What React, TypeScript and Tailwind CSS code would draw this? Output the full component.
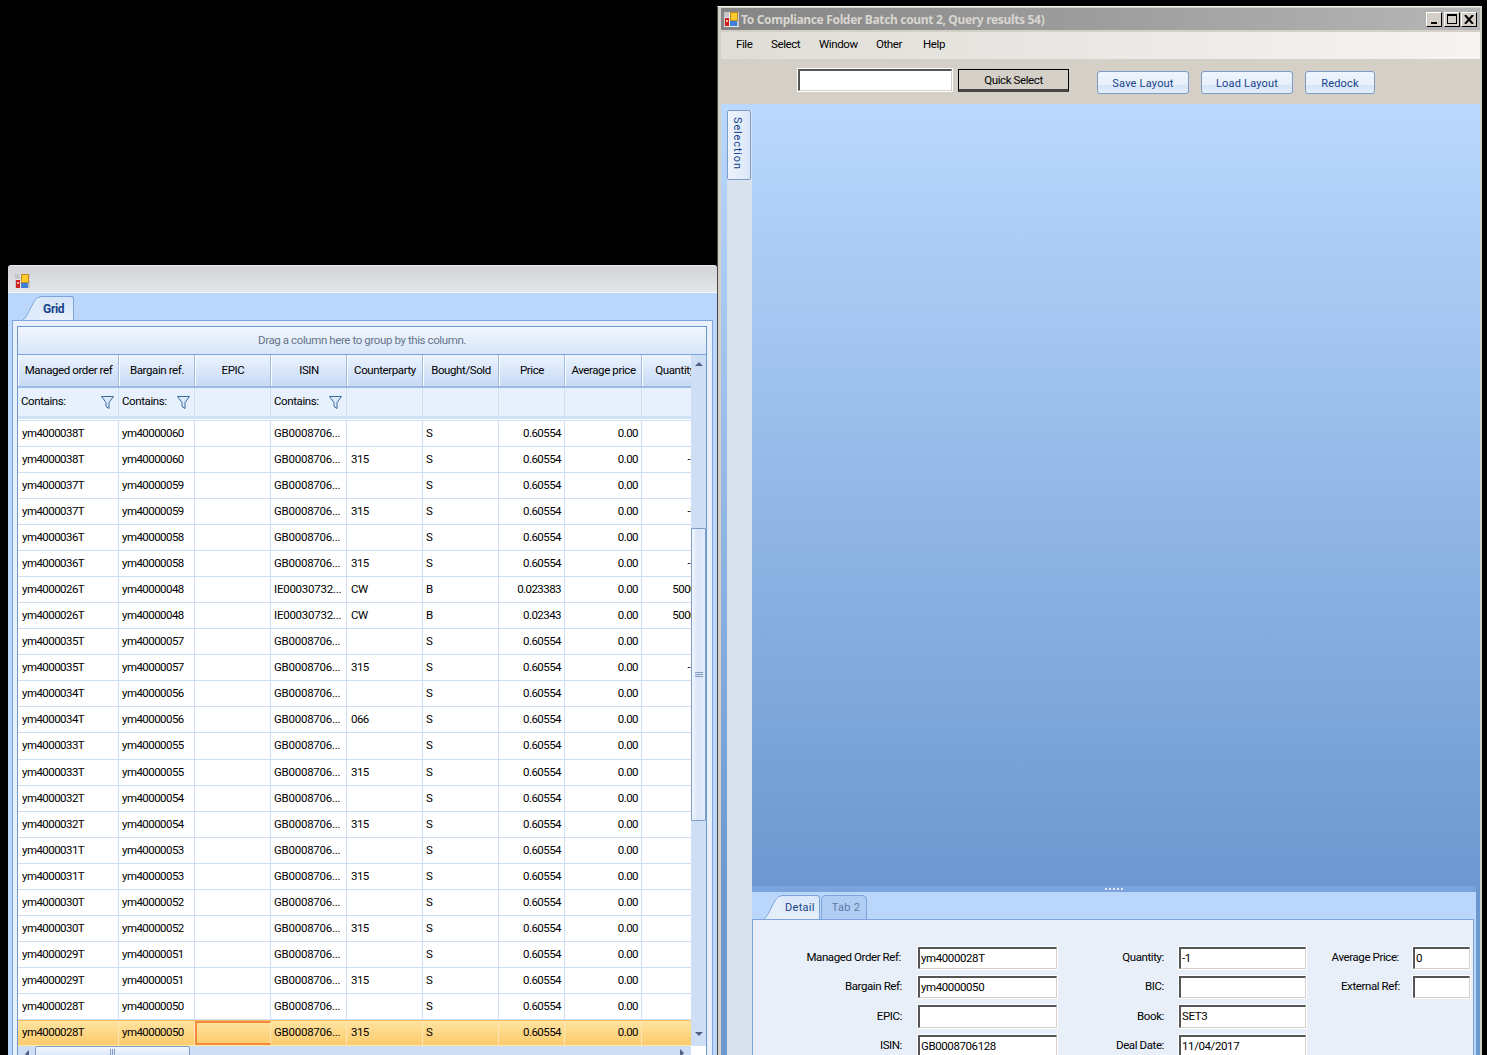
import { FC, ReactNode } from "react";

const FONT = "font-['Roboto','Liberation_Sans',sans-serif]";

const colWidths = [101, 76, 76, 76, 76, 76, 66, 77, 66];

type Row = {
  order: string;
  bargain: string;
  isin?: string;
  cp?: string;
  side?: string;
  price?: string;
  qty?: string;
};

const rows: Row[] = [
  { order: "ym4000038T", bargain: "ym40000060" },
  { order: "ym4000038T", bargain: "ym40000060", cp: "315", qty: "-1" },
  { order: "ym4000037T", bargain: "ym40000059" },
  { order: "ym4000037T", bargain: "ym40000059", cp: "315", qty: "-1" },
  { order: "ym4000036T", bargain: "ym40000058" },
  { order: "ym4000036T", bargain: "ym40000058", cp: "315", qty: "-1" },
  { order: "ym4000026T", bargain: "ym40000048", isin: "IE00030732...", cp: "CW", side: "B", price: "0.023383", qty: "5000" },
  { order: "ym4000026T", bargain: "ym40000048", isin: "IE00030732...", cp: "CW", side: "B", price: "0.02343", qty: "5000" },
  { order: "ym4000035T", bargain: "ym40000057" },
  { order: "ym4000035T", bargain: "ym40000057", cp: "315", qty: "-1" },
  { order: "ym4000034T", bargain: "ym40000056" },
  { order: "ym4000034T", bargain: "ym40000056", cp: "066" },
  { order: "ym4000033T", bargain: "ym40000055" },
  { order: "ym4000033T", bargain: "ym40000055", cp: "315" },
  { order: "ym4000032T", bargain: "ym40000054" },
  { order: "ym4000032T", bargain: "ym40000054", cp: "315" },
  { order: "ym4000031T", bargain: "ym40000053" },
  { order: "ym4000031T", bargain: "ym40000053", cp: "315" },
  { order: "ym4000030T", bargain: "ym40000052" },
  { order: "ym4000030T", bargain: "ym40000052", cp: "315" },
  { order: "ym4000029T", bargain: "ym40000051" },
  { order: "ym4000029T", bargain: "ym40000051", cp: "315" },
  { order: "ym4000028T", bargain: "ym40000050" },
  { order: "ym4000028T", bargain: "ym40000050", cp: "315" },
];

const AppIcon: FC = () => (
  <svg width="15" height="15" viewBox="0 0 15 15" className="shrink-0">
    <rect x="0" y="0" width="15" height="15" fill="#c6c6c6" />
    <path d="M0 5.5h15M5.5 0v15M0 14.5h15" stroke="#e6e6e6" strokeWidth="1" />
    <rect x="1" y="6" width="4" height="8" fill="#cf1f1f" />
    <rect x="2" y="8" width="2" height="2" fill="#f6b9a8" />
    <rect x="6.5" y="0.5" width="7" height="8" fill="#fdcb2e" stroke="#c08a20" strokeWidth="1" />
    <rect x="6" y="9" width="7" height="5" fill="#3f7fd8" />
  </svg>
);

const Funnel: FC = () => (
  <svg width="13" height="13" viewBox="0 0 13 13" className="shrink-0">
    <path d="M0.5 0.5h12L8 6.5v6L5 10.5v-4z" fill="#dbe9fa" stroke="#3a6a9a" strokeWidth="1" />
  </svg>
);

const Arrow: FC<{ dir: "up" | "down" | "left" | "right" }> = ({ dir }) => {
  const d = {
    up: "M0 4L4 0L8 4z",
    down: "M0 0L8 0L4 4z",
    left: "M4 0L4 8L0 4z",
    right: "M0 0L4 4L0 8z",
  }[dir];
  const horizontal = dir === "left" || dir === "right";
  return (
    <svg width={horizontal ? 4 : 8} height={horizontal ? 8 : 4} viewBox={horizontal ? "0 0 4 8" : "0 0 8 4"}>
      <path d={d} fill="#4d6185" />
    </svg>
  );
};

const TabSlant: FC<{ fill: string }> = ({ fill }) => (
  <svg width="18" height="24" viewBox="0 0 18 24" className="-mr-px shrink-0">
    <path d="M0 24C6 20 10 1 17 1H18V24z" fill={fill} />
    <path d="M0 24C6 20 10 1 17 1H18" fill="none" stroke="#7da5dc" strokeWidth="1" />
  </svg>
);

const HeaderCell: FC<{ w: number; children: ReactNode }> = ({ w, children }) => (
  <div
    style={{ width: w }}
    className="flex h-full shrink-0 items-center justify-center overflow-hidden whitespace-nowrap border-l border-r border-l-white border-r-[#9dbbe4] bg-[linear-gradient(#ecf3fd,#c6daf6)] text-black"
  >
    {children}
  </div>
);

const FilterCell: FC<{ w: number; on?: boolean }> = ({ w, on }) => (
  <div
    style={{ width: w }}
    className="flex h-full shrink-0 items-center justify-between border-r border-r-[#cfe0f5] pl-[3px] pr-[4px]"
  >
    {on && (
      <>
        <span>Contains:</span>
        <Funnel />
      </>
    )}
  </div>
);

const DataRow: FC<{ row: Row; selected: boolean; tall: boolean }> = ({ row, selected, tall }) => {
  const line = selected ? "border-r-[#fbe7b8]" : "border-r-[#cfdff3]";
  const cell = `shrink-0 overflow-hidden whitespace-nowrap border-r ${line} flex h-full items-center`;
  return (
    <div
      className={`flex shrink-0 border-b tracking-[-0.55px] ${tall ? "h-[27px]" : "h-[26px]"} ${
        selected
          ? "border-b-[#fde9a8] border-t border-t-[#f5bb66] bg-[linear-gradient(#fee3a0,#fdcb6c)]"
          : "border-b-[#cfdff3] bg-white"
      }`}
    >
      <div style={{ width: colWidths[0] }} className={`${cell} pl-[4px]`}>{row.order}</div>
      <div style={{ width: colWidths[1] }} className={`${cell} pl-[3px]`}>{row.bargain}</div>
      <div
        style={{ width: colWidths[2] }}
        className={`${cell} ${selected ? "border-2 border-[#f58a3a]" : ""}`}
      />
      <div style={{ width: colWidths[3] }} className={`${cell} pl-[3px] tracking-[-0.25px]`}>
        {row.isin ?? "GB0008706..."}
      </div>
      <div style={{ width: colWidths[4] }} className={`${cell} pl-[4px]`}>{row.cp}</div>
      <div style={{ width: colWidths[5] }} className={`${cell} pl-[3px]`}>{row.side ?? "S"}</div>
      <div style={{ width: colWidths[6] }} className={`${cell} justify-end pr-[3px]`}>
        {row.price ?? "0.60554"}
      </div>
      <div style={{ width: colWidths[7] }} className={`${cell} justify-end pr-[3px]`}>0.00</div>
      <div className="flex h-full w-[54px] shrink-0 items-center justify-end whitespace-nowrap">{row.qty}</div>
    </div>
  );
};

const Grip: FC = () => (
  <div className="flex flex-col gap-[1px]">
    <div className="h-px w-[8px] bg-[#7f9cc5]" />
    <div className="h-px w-[8px] bg-[#7f9cc5]" />
    <div className="h-px w-[8px] bg-[#7f9cc5]" />
  </div>
);

const GridWindow: FC = () => (
  <div className="flex h-[790px] w-[709px] flex-col overflow-hidden rounded-t-[3px] border-t border-t-[#e8eaee] bg-[#a9bfdf]">
    <div className="flex h-[26px] shrink-0 items-center bg-[linear-gradient(#d6d7da_0,#d6d7da_7px,#e6e7e9)] pl-[7px] pt-[4px]">
      <AppIcon />
    </div>
    <div className="flex flex-1 flex-col border-t border-t-[#f4f7fb] bg-[#bad6fb] pl-[4px] pr-[4px]">
      <div className="flex h-[27px] shrink-0 items-end pl-[11px]">
        <TabSlant fill="#dfeafa" />
        <div className="flex h-[24px] w-[34px] items-center rounded-tr-[3px] border-r border-t border-[#7da5dc] bg-[linear-gradient(#d5e4f9,#e8f0fb)] pl-[3px] pt-px text-[12px] font-bold tracking-[-0.3px] text-[#15428b]">
          Grid
        </div>
      </div>
      <div className="flex flex-1 flex-col border-l border-r border-t border-[#7da5dc] bg-[#e8f0fb] pl-[4px] pr-[5px] pt-[5px]">
        <div className="flex flex-1 flex-col overflow-hidden border-l border-r border-t border-[#6f97cf]">
          <div className="flex h-[28px] shrink-0 items-center justify-center border-b border-b-[#7da5dc] bg-[linear-gradient(#f2f6fd,#d8e6f9)] pt-px text-[#66758a]">
            Drag a column here to group by this column.
          </div>
          <div className="flex min-h-0 flex-1">
            <div className="flex w-[673px] shrink-0 flex-col overflow-hidden bg-white">
              <div className="flex h-[33px] shrink-0 border-b-2 border-b-[#9dbbe4]">
                <HeaderCell w={colWidths[0]}>Managed order ref</HeaderCell>
                <HeaderCell w={colWidths[1]}>Bargain ref.</HeaderCell>
                <HeaderCell w={colWidths[2]}>EPIC</HeaderCell>
                <HeaderCell w={colWidths[3]}>ISIN</HeaderCell>
                <HeaderCell w={colWidths[4]}>Counterparty</HeaderCell>
                <HeaderCell w={colWidths[5]}>Bought/Sold</HeaderCell>
                <HeaderCell w={colWidths[6]}>Price</HeaderCell>
                <HeaderCell w={colWidths[7]}>Average price</HeaderCell>
                <HeaderCell w={colWidths[8]}>Quantity</HeaderCell>
              </div>
              <div className="flex h-[28px] shrink-0 bg-[#e6f1fd]">
                {colWidths.map((w, i) => (
                  <FilterCell key={i} w={w} on={i === 0 || i === 1 || i === 3} />
                ))}
              </div>
              <div className="h-[3px] shrink-0 bg-[#d0e1f6]" />
              <div className="h-[2px] shrink-0 border-b border-b-[#cfdff3] bg-white" />
              {rows.map((row, i) => (
                <DataRow key={i} row={row} selected={i === rows.length - 1} tall={i === 12} />
              ))}
            </div>
            <div className="flex w-[15px] shrink-0 flex-col bg-[#cedff5]">
              <div className="flex h-[18px] shrink-0 items-center justify-center">
                <Arrow dir="up" />
              </div>
              <div className="h-[155px] shrink-0" />
              <div className="flex h-[293px] shrink-0 items-center justify-center rounded-[1px] border border-[#7f9cc5] bg-[linear-gradient(90deg,#f2f6fd,#d8e5f7_45%,#e3ecf9)]">
                <Grip />
              </div>
              <div className="flex-1" />
              <div className="flex h-[24px] shrink-0 items-center justify-center">
                <Arrow dir="down" />
              </div>
            </div>
          </div>
          <div className="flex h-[10px] shrink-0">
            <div className="flex w-[673px] shrink-0 items-start bg-[#cedff5]">
              <div className="flex h-[10px] w-[17px] shrink-0 items-center justify-center pt-[6px]">
                <Arrow dir="left" />
              </div>
              <div className="flex h-[10px] w-[155px] shrink-0 justify-center rounded-t-[2px] border-l border-r border-t border-[#7f9cc5] bg-[linear-gradient(#f2f6fd,#dbe7f8)] pt-[2px]">
                <div className="flex gap-[1px]">
                  <div className="h-full w-px bg-[#7f9cc5]" />
                  <div className="h-full w-px bg-[#7f9cc5]" />
                  <div className="h-full w-px bg-[#7f9cc5]" />
                </div>
              </div>
              <div className="flex-1" />
              <div className="flex h-[10px] w-[11px] shrink-0 justify-start pt-[3px]">
                <Arrow dir="right" />
              </div>
            </div>
            <div className="w-[15px] bg-white" />
          </div>
        </div>
      </div>
    </div>
  </div>
);

const Sunken: FC<{ value?: string }> = ({ value }) => (
  <div className="flex h-full items-center overflow-hidden whitespace-nowrap border-b border-l-2 border-r border-t-2 border-b-[#d4d0c8] border-l-[#555] border-r-[#d4d0c8] border-t-[#555] bg-white pl-px text-black outline outline-1 outline-white">
    {value}
  </div>
);

const Label: FC<{ pad: string; children?: ReactNode }> = ({ pad, children }) => (
  <div className={`flex items-center justify-end whitespace-nowrap text-black ${pad}`}>{children}</div>
);

const BlueButton: FC<{ w: string; children: ReactNode }> = ({ w, children }) => (
  <div
    className={`flex h-[23px] ${w} items-center justify-center rounded-[3px] border border-[#7e9cc8] bg-[linear-gradient(#eef4fd_0,#e8f0fb_60%,#d6e4f7_62%,#e3edfa)] pt-[2px] text-[11px] tracking-[0.2px] text-[#15428b]`}
  >
    {children}
  </div>
);

const WindowButton: FC<{ children: ReactNode }> = ({ children }) => (
  <div className="flex h-[15px] w-[16px] items-center justify-center border-b border-l border-r border-t border-b-black border-l-white border-r-black border-t-white bg-[#d4d0c8]">
    {children}
  </div>
);

const MainWindow: FC = () => (
  <div className="flex h-[1049px] w-[765px] flex-col overflow-hidden border-l border-r-2 border-l-[#444] border-r-[#d4d0c8] border-t border-t-[#f0efec] bg-[#d4d0c8]">
    <div className="flex flex-1 flex-col overflow-hidden pl-[3px] pt-px">
      <div className="flex h-[22px] shrink-0 items-center bg-[linear-gradient(90deg,#858585,#b6b6b6)] pl-[3px] pr-[3px] font-bold text-[#d8d6d0]">
        <AppIcon />
        <span className="ml-[2px] flex-1 whitespace-nowrap pt-px font-['Noto_Sans','Liberation_Sans',sans-serif] text-[12px] tracking-[-0.33px]">
          To Compliance Folder Batch count 2, Query results 54)
        </span>
        <WindowButton>
          <div className="mt-[7px] h-[2px] w-[6px] bg-black" />
        </WindowButton>
        <div className="w-[2px]" />
        <WindowButton>
          <div className="h-[10px] w-[10px] border border-t-2 border-black" />
        </WindowButton>
        <div className="w-[1px]" />
        <WindowButton>
          <svg width="10" height="9" viewBox="0 0 10 9">
            <path d="M1 0L9 9M9 0L1 9" stroke="#000" strokeWidth="2" />
          </svg>
        </WindowButton>
      </div>
      <div className="mt-[2px] flex h-[27px] shrink-0 items-center bg-[linear-gradient(90deg,#dfddd7,#f5f4f1)] pb-[2px] pl-[15px] text-black">
        <span className="w-[35px]">File</span>
        <span className="w-[48px]">Select</span>
        <span className="w-[57px]">Window</span>
        <span className="w-[47px]">Other</span>
        <span>Help</span>
      </div>
      <div className="flex h-[45px] shrink-0 items-start bg-[#d4d0c8] pl-[77px] pt-[10px]">
        <div className="h-[22px] w-[154px]">
          <Sunken />
        </div>
        <div className="ml-[6px] flex h-[23px] w-[111px] items-center justify-center border border-b-[3px] border-black border-b-[#444] bg-[#d4d0c8] pt-[2px] text-black">
          Quick Select
        </div>
        <div className="ml-[28px] mt-[2px] flex gap-[12px]">
          <BlueButton w="w-[92px]">Save Layout</BlueButton>
          <BlueButton w="w-[92px]">Load Layout</BlueButton>
          <BlueButton w="w-[70px]">Redock</BlueButton>
        </div>
      </div>
      <div className="flex min-h-0 flex-1 bg-[linear-gradient(#bad8fd_0,#6c98d0_782px)] pl-[6px] pr-[4px]">
        <div className="mt-[6px] flex w-[25px] shrink-0 flex-col bg-[#d9e1ed]">
          <div className="flex h-[70px] w-[24px] items-center justify-center rounded-[2px] border border-[#7e9cc8] bg-[linear-gradient(90deg,#eef4fd,#dbe7f8)] pb-[4px] pr-[3px] text-[11px] tracking-[0.85px] text-[#15428b] [writing-mode:vertical-rl]">
            Selection
          </div>
        </div>
        <div className="flex min-w-0 flex-1 flex-col">
          <div className="h-[782px] shrink-0" />
          <div className="flex h-[6px] shrink-0 items-center justify-center gap-[2px] bg-[#7ba3dc]">
            {[0, 1, 2, 3, 4].map((i) => (
              <div key={i} className="h-[2px] w-[2px] bg-[#dfeafa]" />
            ))}
          </div>
          <div className="flex h-[27px] shrink-0 items-end bg-[#bad6fb] pl-[12px]">
            <TabSlant fill="#e4edf9" />
            <div className="flex h-[24px] w-[39px] items-center rounded-tr-[3px] border-r border-t border-[#7da5dc] bg-[linear-gradient(#d9e6fa,#e8eff9)] pl-[4px] text-[11px] tracking-[0.3px] text-[#15428b]">
              Detail
            </div>
            <div className="ml-[1px] flex h-[24px] w-[46px] items-center justify-center rounded-t-[5px] border-l border-r border-t border-[#7da5dc] bg-[#b0cdf3] pl-[4px] text-[11px] tracking-[0.3px] text-[#5c7ba6]">
              Tab 2
            </div>
          </div>
          <div className="flex-1 bg-[#bad6fb] pr-[2px]">
            <div className="h-full border-l border-r border-t border-[#7da5dc] bg-[#e8eff9] pt-[27px]">
              <div className="grid grid-cols-[165px_139px_122px_127px_107px_57px] grid-rows-[22px_22px_23px_22px] gap-y-[7px]">
                <Label pad="pr-[17px]">Managed Order Ref:</Label>
                <Sunken value="ym4000028T" />
                <Label pad="pr-[15px]">Quantity:</Label>
                <Sunken value="-1" />
                <Label pad="pr-[14px]">Average Price:</Label>
                <Sunken value="0" />
                <Label pad="pr-[16px]">Bargain Ref:</Label>
                <Sunken value="ym40000050" />
                <Label pad="pr-[15px]">BIC:</Label>
                <Sunken />
                <Label pad="pr-[13px]">External Ref:</Label>
                <Sunken />
                <Label pad="pr-[16px]">EPIC:</Label>
                <Sunken />
                <Label pad="pr-[15px]">Book:</Label>
                <Sunken value="SET3" />
                <div />
                <div />
                <Label pad="pr-[16px]">ISIN:</Label>
                <Sunken value="GB0008706128" />
                <Label pad="pr-[15px]">Deal Date:</Label>
                <Sunken value="11/04/2017" />
                <div />
                <div />
              </div>
            </div>
          </div>
        </div>
      </div>
    </div>
  </div>
);

const App: FC = () => (
  <div className={`flex h-[1055px] w-[1487px] overflow-hidden bg-black text-[11.5px] leading-none tracking-[-0.4px] ${FONT}`}>
    <div className="w-[717px] shrink-0 pl-[8px] pt-[265px]">
      <GridWindow />
    </div>
    <div className="shrink-0 pt-[6px]">
      <MainWindow />
    </div>
  </div>
);

export default App;
